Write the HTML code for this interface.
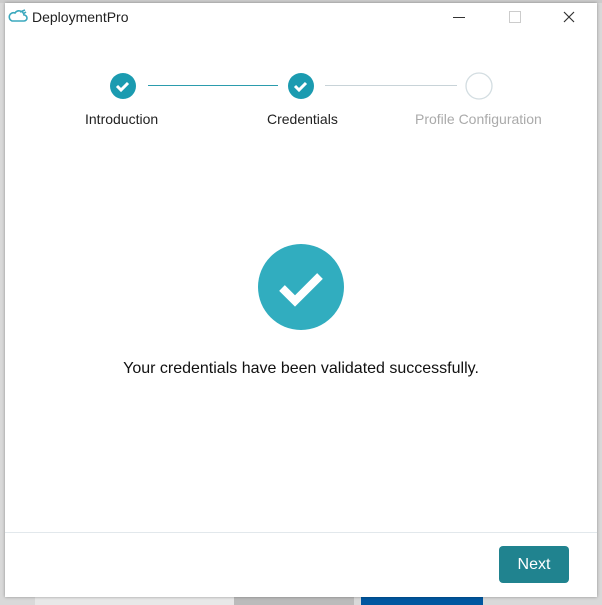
<!DOCTYPE html>
<html><head><style>
body{margin:0;width:602px;height:605px;position:relative;overflow:hidden;background:#d9d9d9;font-family:"Liberation Sans",sans-serif;}
.win{position:absolute;left:5px;top:3px;width:592px;height:594px;background:#fff;box-shadow:0 0 3px rgba(0,0,0,.35);}
.t{position:absolute;font-size:14px;color:#222;}
</style></head><body>
<div style="position:absolute;left:0;top:0;width:602px;height:3px;background:#ccc"></div>
<div style="position:absolute;left:35px;top:597px;width:200px;height:8px;background:#e8e8e8"></div>
<div style="position:absolute;left:234px;top:597px;width:120px;height:8px;background:#bbb"></div>
<div style="position:absolute;left:361px;top:597px;width:122px;height:8px;background:#0057a0"></div>
<div class="win">
<svg style="position:absolute;left:3px;top:6px" width="20" height="14" viewBox="0 0 20 14"><path d="M4 12 H16 A3 3 0 0 0 16 6 A5 5 0 0 0 7 4 A4 4 0 0 0 4 12 Z M12 3 L17 1 M15 5 L18 3" fill="none" stroke="#3aa8bd" stroke-width="1.6"/></svg>
<div class="t" style="left:27px;top:6px;font-size:14px">DeploymentPro</div>
<div style="position:absolute;left:448px;top:14px;width:12px;height:1px;background:#333"></div>
<div style="position:absolute;left:504px;top:8px;width:10px;height:10px;border:1px solid #ccc"></div>
<svg style="position:absolute;left:558px;top:8px" width="12" height="12"><path d="M1 1L11 11M11 1L1 11" stroke="#333" stroke-width="1.2"/></svg>
<div style="position:absolute;left:143px;top:82px;width:130px;height:1px;background:#2b9cad"></div>
<div style="position:absolute;left:320px;top:82px;width:132px;height:1px;background:#c8d3d8"></div>
<svg style="position:absolute;left:105px;top:69px" width="28" height="28"><circle cx="13" cy="14" r="13" fill="#1b9bb0"/><path d="M7 14l4 4 7-7" fill="none" stroke="#fff" stroke-width="3"/></svg>
<svg style="position:absolute;left:283px;top:69px" width="28" height="28"><circle cx="13" cy="14" r="13" fill="#1b9bb0"/><path d="M7 14l4 4 7-7" fill="none" stroke="#fff" stroke-width="3"/></svg>
<svg style="position:absolute;left:460px;top:69px" width="28" height="28"><circle cx="14" cy="14" r="13" fill="none" stroke="#d3dde1" stroke-width="1.3"/></svg>
<div class="t" style="left:80px;top:108px">Introduction</div>
<div class="t" style="left:262px;top:108px">Credentials</div>
<div class="t" style="left:410px;top:108px;color:#aaa">Profile Configuration</div>
<svg style="position:absolute;left:253px;top:241px" width="86" height="86"><circle cx="43" cy="43" r="43" fill="#31adbf"/><path d="M24 44l13 13 25-25" fill="none" stroke="#fff" stroke-width="8"/></svg>
<div class="t" style="left:0;width:592px;text-align:center;top:357px;font-size:16px;color:#111">Your credentials have been validated successfully.</div>
<div style="position:absolute;left:0;top:529px;width:592px;height:1px;background:#e2e8ec"></div>
<div style="position:absolute;left:494px;top:543px;width:70px;height:37px;background:#20838f;border-radius:4px;color:#fff;font-size:16px;line-height:37px;text-align:center">Next</div>
</div>
</body></html>
